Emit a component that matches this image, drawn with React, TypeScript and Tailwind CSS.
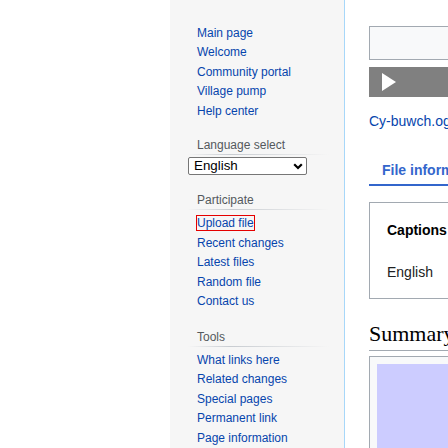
const navLinks = ["Main page", "Welcome", "Community portal", "Village pump", "Help center"]
const participateLinks = ["Upload file", "Recent changes", "Latest files", "Random file", "Contact us"]
const toolLinks = ["What links here", "Related changes", "Special pages", "Permanent link", "Page information"]

const SideLink = ({ label, outlined }: { label: string; outlined?: boolean }) => (
  <li className="py-[3px] leading-[13.5px]">
    <a className={outlined ? "text-[#0645ad] outline outline-[#e50000]" : "text-[#0645ad]"}>{label}</a>
  </li>
)

const Heading = ({ label, className }: { label: string; className: string }) => (
  <div className={className}>
    <h3 className="pl-[27px] text-[12px] leading-[16px] text-[#54595d]">{label}</h3>
    <div className="mt-[1.5px] ml-[18px] mr-[15px] h-px bg-linear-to-r from-[#f6f6f6] via-[#c8ccd1] via-30% to-[#f6f6f6]" />
  </div>
)

const Sidebar = () => {
  return (
    <div className="w-[175px] shrink-0 h-full bg-[#f6f6f6] border-r border-[#a7d7f9] text-[12px]">
      <ul className="pl-[27px] mt-[23.75px]">
        {navLinks.map((l) => (
          <SideLink key={l} label={l} />
        ))}
      </ul>

      <Heading label="Language select" className="mt-[15.5px]" />
      <div className="mt-[2px] ml-[18px] w-[119px] h-[18px] bg-white border border-[#767676] rounded-[2px] flex items-center justify-between pl-[5px] pr-[3px]">
        <span className="text-[13.33px] leading-[16px] text-black">English</span>
        <svg width="10" height="7" viewBox="0 0 10 7">
          <path d="M1.2 1.2 L5 5 L8.8 1.2" fill="none" stroke="#000" strokeWidth="2.2" />
        </svg>
      </div>

      <Heading label="Participate" className="mt-[16.5px]" />
      <ul className="pl-[27px] mt-[3.8px]">
        {participateLinks.map((l, i) => (
          <SideLink key={l} label={l} outlined={i === 0} />
        ))}
      </ul>

      <Heading label="Tools" className="mt-[17.2px]" />
      <ul className="pl-[27px] mt-[3.5px]">
        {toolLinks.map((l) => (
          <SideLink key={l} label={l} />
        ))}
      </ul>
    </div>
  )
}

const Content = () => {
  return (
    <div className="w-[700px] shrink-0 pl-[24px] text-[14px] text-[#202122]">
      <div className="h-[3px] overflow-hidden">
        <p className="-mt-[13px] text-[12.7px] leading-[16px] text-[#54595d]">From Wikimedia Commons, the free media repository</p>
      </div>

      <div className="mt-[23px] h-[34px] border border-[#a2a9b1] bg-[#f8f9fa]" />
      <div className="mt-[7px] h-[30px] bg-[#808080] flex items-center pl-[13px]">
        <svg width="14" height="18" viewBox="0 0 14 18">
          <polygon points="0,0 14,9 0,18" fill="#fff" />
        </svg>
      </div>

      <div className="mt-[14.4px] leading-[20px] text-[#0645ad]">Cy-buwch.ogg</div>

      <div className="mt-[29px] w-[240px] border-b-2 border-[#3366cc] pb-[2.3px]">
        <span className="pl-[13px] font-bold text-[14px] leading-[20px] text-[#3366cc]">File information</span>
      </div>

      <div className="mt-[16.3px] h-[97px] border border-[#a2a9b1] pl-[17px] pt-[17.4px]">
        <div className="font-bold leading-[20px] text-black">Captions</div>
        <div className="mt-[22px] leading-[20px]">English</div>
      </div>

      <h2 className="mt-[21px] border-b border-[#a2a9b1] pb-[2px] font-['Liberation_Serif',serif] text-[22px] leading-[28px] text-black">
        Summary
      </h2>

      <div className="mt-[5px] border border-[#a2a9b1] bg-[#f8f9fa] p-[7px]">
        <div className="h-[120px] bg-[#ccccff]" />
      </div>
    </div>
  )
}

export default function App() {
  return (
    <div className="w-[448px] h-[448px] overflow-hidden flex bg-white font-['Liberation_Sans',Arial,sans-serif]">
      <div className="w-[170px] shrink-0" />
      <Sidebar />
      <Content />
    </div>
  )
}
